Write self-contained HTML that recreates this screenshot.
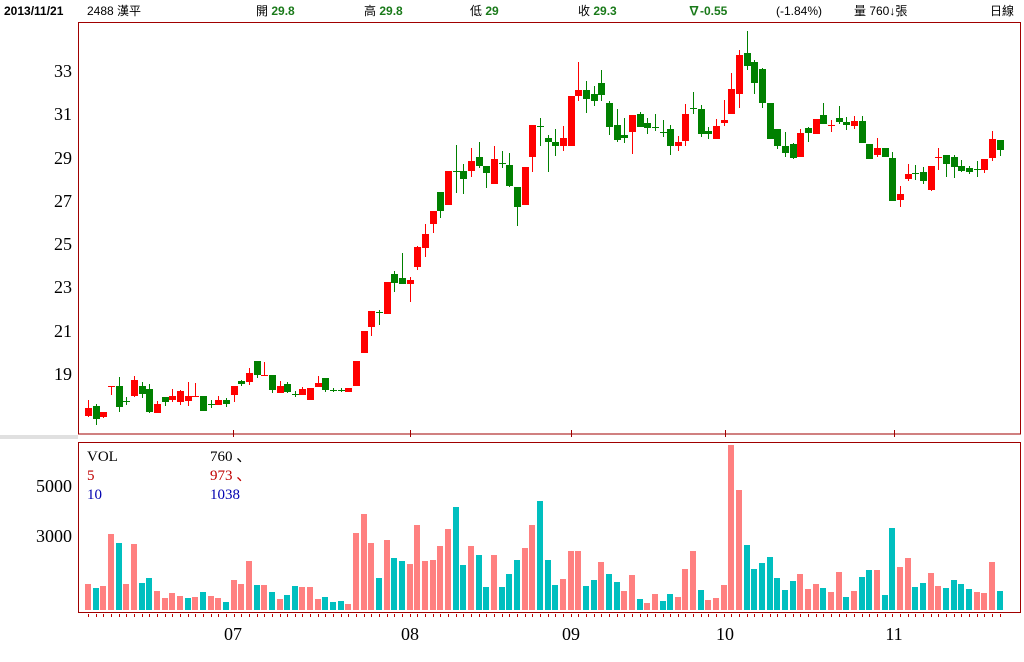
<!DOCTYPE html>
<html><head><meta charset="utf-8"><style>
html,body{margin:0;padding:0;background:#fff;width:1024px;height:662px;overflow:hidden}
svg{display:block}
.h{font-family:"Liberation Sans","Noto Sans CJK TC",sans-serif;font-size:12px;fill:#000}
.g{fill:#1a7a1a;font-weight:bold}
.ax{font-family:"Liberation Serif",serif;font-size:18px;fill:#000}
.vl{font-family:"Liberation Serif",serif;font-size:15px}
</style></head><body>
<svg id="s" width="1024" height="662" xmlns="http://www.w3.org/2000/svg">
<rect x="0" y="435" width="78" height="4" fill="#e0e0e0"/>
<text class="h" x="4" y="15" font-weight="bold" font-family="Liberation Serif">2013/11/21</text>
<text class="h" x="87" y="15">2488 漢平</text>
<text class="h" x="256" y="15">開 <tspan class="g">29.8</tspan></text>
<text class="h" x="364" y="15">高 <tspan class="g">29.8</tspan></text>
<text class="h" x="470" y="15">低 <tspan class="g">29</tspan></text>
<text class="h" x="578" y="15">收 <tspan class="g">29.3</tspan></text>
<text class="h g" x="688" y="15">∇-0.55</text>
<text class="h" x="776" y="15">(-1.84%)</text>
<text class="h" x="854" y="15">量 760↓張</text>
<text class="h" x="990" y="15">日線</text>
<g class="ax" text-anchor="end">
<text x="72" y="77">33</text><text x="72" y="120">31</text><text x="72" y="164">29</text>
<text x="72" y="207">27</text><text x="72" y="250">25</text><text x="72" y="293">23</text>
<text x="72" y="337">21</text><text x="72" y="380">19</text>
<text x="72" y="492">5000</text><text x="72" y="542">3000</text>
</g>
<g class="ax" text-anchor="middle">
<text x="233" y="640">07</text><text x="410" y="640">08</text><text x="571" y="640">09</text>
<text x="725" y="640">10</text><text x="894" y="640">11</text>
</g>
<text class="vl" x="87" y="461" fill="#000">VOL</text>
<text class="vl" x="87" y="480" fill="#c00000">5</text>
<text class="vl" x="87" y="499" fill="#0000b0">10</text>
<text class="vl" x="210" y="461" fill="#000">760 、</text>
<text class="vl" x="210" y="480" fill="#c00000">973 、</text>
<text class="vl" x="210" y="499" fill="#0000b0">1038</text>
<g id="c"></g>
<rect x="78.5" y="22.5" width="942" height="411.5" fill="none" stroke="#a00000"/>
<rect x="78.5" y="442.5" width="942" height="170" fill="none" stroke="#a00000"/>
<g stroke="#a00000"><line x1="233.5" y1="430" x2="233.5" y2="437"/><line x1="410.5" y1="430" x2="410.5" y2="437"/><line x1="571.5" y1="430" x2="571.5" y2="437"/><line x1="725.5" y1="430" x2="725.5" y2="437"/><line x1="894.5" y1="430" x2="894.5" y2="437"/></g>
</svg>
<script>
var C=[[408,416,400,417,'r'],[406,419,404,425,'g'],[412,417,412,418,'r'],[386,387,386,395,'r'],[386,407,377,412,'g'],[401,402,397,405,'g'],[380,396,376,397,'r'],[386,394,382,398,'g'],[389,412,384,413,'g'],[404,413,401,413,'r'],[397,402,397,406,'g'],[396,400,389,402,'r'],[391,402,390,405,'r'],[396,401,382,406,'r'],[396,397,383,397,'r'],[396,411,396,411,'g'],[404,405,400,408,'g'],[400,405,396,405,'r'],[400,404,398,407,'g'],[386,395,386,402,'r'],[381,384,380,386,'g'],[373,382,368,385,'r'],[361,375,361,378,'g'],[375,376,362,376,'r'],[375,390,375,393,'g'],[386,393,381,393,'r'],[384,392,382,393,'g'],[394,395,391,397,'g'],[389,395,387,395,'r'],[388,400,388,400,'r'],[383,387,376,387,'r'],[378,390,378,392,'g'],[390,391,388,392,'g'],[390,391,388,392,'g'],[388,392,388,392,'r'],[361,386,361,386,'r'],[331,353,331,353,'r'],[311,327,311,336,'r'],[312,313,310,325,'g'],[282,314,282,314,'r'],[274,283,271,292,'g'],[278,284,253,284,'g'],[280,284,277,302,'r'],[247,267,246,270,'r'],[234,248,224,257,'r'],[211,224,211,233,'r'],[192,211,192,218,'g'],[171,205,171,205,'r'],[171,172,145,193,'g'],[171,179,164,194,'g'],[161,171,148,177,'r'],[157,166,142,168,'g'],[166,173,166,188,'g'],[159,184,146,184,'r'],[163,164,151,168,'g'],[165,186,153,187,'g'],[187,207,187,226,'g'],[167,205,167,205,'r'],[125,157,125,172,'r'],[126,127,118,146,'g'],[138,142,135,172,'g'],[142,146,129,156,'g'],[138,146,126,151,'r'],[96,146,96,146,'r'],[90,96,62,101,'r'],[90,99,81,113,'g'],[94,101,86,106,'g'],[83,95,70,101,'g'],[103,127,101,135,'g'],[125,140,109,142,'g'],[135,138,118,143,'g'],[115,132,115,154,'r'],[114,127,112,127,'g'],[123,128,118,134,'g'],[127,128,114,131,'g'],[132,133,120,137,'g'],[129,146,125,155,'g'],[142,146,136,151,'r'],[114,141,104,146,'r'],[108,109,92,114,'g'],[109,134,105,137,'g'],[131,134,127,139,'g'],[126,139,119,139,'r'],[120,123,100,126,'r'],[89,114,73,114,'r'],[55,94,50,108,'r'],[53,66,31,70,'g'],[62,83,60,94,'g'],[69,103,68,108,'g'],[103,139,103,139,'g'],[129,146,129,149,'g'],[146,153,132,157,'g'],[144,158,143,159,'g'],[133,157,129,157,'r'],[128,133,127,142,'g'],[119,134,119,134,'r'],[115,124,103,124,'g'],[125,126,120,132,'r'],[118,122,106,124,'g'],[122,125,117,130,'g'],[121,126,116,129,'r'],[121,143,116,143,'g'],[144,159,144,159,'g'],[148,155,138,157,'r'],[148,157,148,157,'g'],[158,201,152,201,'g'],[194,200,186,207,'r'],[174,179,164,181,'r'],[173,174,165,180,'g'],[172,181,167,184,'g'],[166,190,166,191,'r'],[157,158,148,170,'r'],[155,164,155,177,'g'],[157,167,155,178,'g'],[166,171,160,172,'g'],[168,172,166,174,'g'],[169,170,161,177,'g'],[159,170,159,173,'r'],[139,158,131,161,'r'],[140,150,140,156,'g']];
var V="584p 588t 586p 534p 543t 584p 544p 583t 578t 591p 598p 593p 596p 598t 597p 592t 596p 598p 602t 580p 584p 561p 585t 585p 592t 599p 595t 586t 587p 587p 599p 597t 602t 601t 604p 533p 514p 543p 578t 540p 558t 561t 564p 525p 561p 560p 546p 529p 507t 565t 546p 555t 587t 555p 587t 574t 560t 548p 525p 501t 560t 585t 579p 551p 551p 586t 580t 562p 574t 582t 591p 575p 599t 603p 594p 601t 594t 597p 569p 551p 590t 600p 598p 585p 445p 490p 545t 569t 563t 557t 578t 590t 581t 574p 589p 584p 588t 592p 572p 597t 591p 577t 570t 570p 595t 528t 567p 558p 587t 583t 573p 586p 588t 580t 584t 589t 592p 593p 562p 591t".split(' ');
var h='';
for(var i=0;i<C.length;i++){var x=Math.round(88+i*7.66),c=C[i],col=c[4]=='r'?'#ff0000':'#008000';
h+='<line x1="'+(x+0.5)+'" y1="'+c[2]+'" x2="'+(x+0.5)+'" y2="'+c[3]+'" stroke="'+col+'"/>';
var bh=Math.max(c[1]-c[0],1);h+='<rect x="'+(x-3)+'" y="'+c[0]+'" width="7" height="'+bh+'" fill="'+col+'"/>';
var v=V[i],t=parseInt(v),vc=v.slice(-1)=='p'?'#ff8080':'#00bfbf';
h+='<rect x="'+(x-3)+'" y="'+t+'" width="6" height="'+(610-t)+'" fill="'+vc+'"/>';
h+='<line x1="'+(x+0.5)+'" y1="614" x2="'+(x+0.5)+'" y2="617" stroke="#c00000"/>';}
document.getElementById('c').innerHTML=h;
</script>
</body></html>
